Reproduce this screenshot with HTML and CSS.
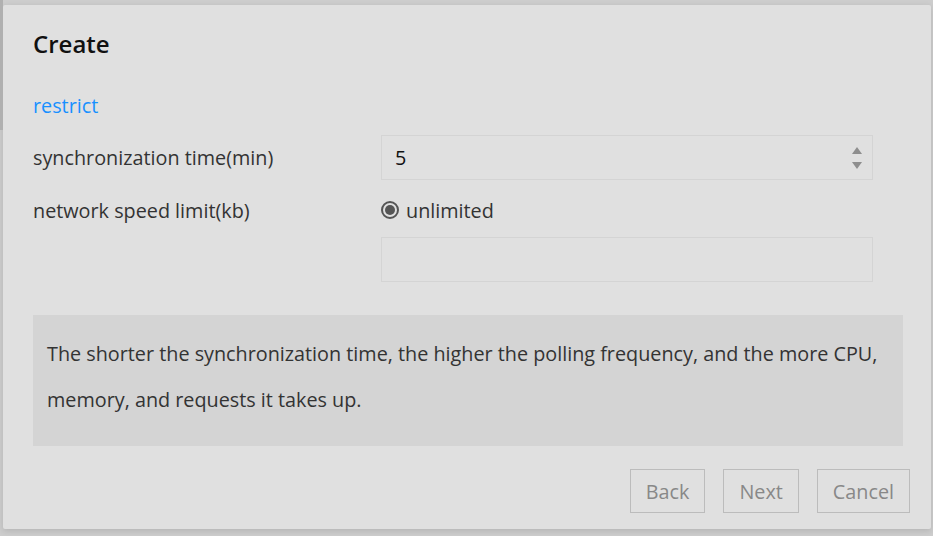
FILE: index.html
```html
<!DOCTYPE html>
<html>
<head>
<meta charset="utf-8">
<link rel="stylesheet" href="styles.css">
</head>
<body>
<div class="backdrop">
  <div class="side-strip"></div>
  <div class="dialog">
    <h1 class="title">Create</h1>
    <div class="section-link">restrict</div>
    <div class="form-row first">
      <div class="label">synchronization time(min)</div>
      <div class="field">
        <div class="input number">
          <span class="value">5</span>
          <span class="spinner">
            <svg width="12" height="26" viewBox="0 0 12 26"><path d="M6 2 L11 9 L1 9 Z" fill="#8e8e8e"/><path d="M1 17 L11 17 L6 24 Z" fill="#8e8e8e"/></svg>
          </span>
        </div>
      </div>
    </div>
    <div class="form-row radio-row">
      <div class="label">network speed limit(kb)</div>
      <div class="field">
        <label class="radio"><span class="radio-dot"></span><span>unlimited</span></label>
      </div>
    </div>
    <div class="form-row extra">
      <div class="label"></div>
      <div class="field"><div class="input"></div></div>
    </div>
    <div class="info">The shorter the synchronization time, the higher the polling frequency, and the more CPU, memory, and requests it takes up.</div>
    <div class="actions">
      <button class="btn">Back</button>
      <button class="btn">Next</button>
      <button class="btn">Cancel</button>
    </div>
  </div>
</div>
</body>
</html>
```
FILE: styles.css
```css
html, body {
  margin: 0;
  padding: 0;
  width: 933px;
  height: 536px;
  overflow: hidden;
  background: #cdcdcd;
  font-family: "Open Sans", "Noto Sans", sans-serif;
}
.backdrop {
  position: relative;
  width: 933px;
  height: 536px;
  padding: 5px 2px 0 3px;
  box-sizing: border-box;
}
.side-strip {
  position: absolute;
  left: 0;
  top: 0;
  width: 3px;
  height: 130px;
  background: #b0b0b0;
}
.dialog {
  background: #e0e0e0;
  height: 524px;
  box-sizing: border-box;
  padding: 27px 22px 0 30px;
  box-shadow: 0 2px 6px rgba(0,0,0,0.12);
  border-radius: 2px;
}
.title {
  margin: 0;
  font-size: 24px;
  font-weight: 600;
  color: #111;
  line-height: 24px;
}
.section-link {
  margin-top: 38px;
  color: #1890ff;
  font-size: 19.8px;
  line-height: 24px;
}
.form-row {
  display: flex;
  align-items: center;
}
.form-row.first {
  margin-top: 17px;
}
.form-row.radio-row {
  margin-top: 7px;
}
.form-row.extra {
  margin-top: 4px;
}
.label {
  width: 348px;
  font-size: 19.8px;
  color: #333;
}
.field {
  width: 492px;
}
.input {
  height: 45px;
  border: 1px solid #d4d4d4;
  box-sizing: border-box;
  display: flex;
  align-items: center;
  justify-content: space-between;
  padding: 0 9px 0 13px;
  font-size: 19.8px;
  color: #111;
}
.spinner {
  display: flex;
}
.radio {
  display: flex;
  align-items: center;
  gap: 7px;
  height: 46px;
  font-size: 19.8px;
  color: #333;
}
.radio-dot {
  width: 14px;
  height: 14px;
  border: 2px solid #555;
  border-radius: 50%;
  position: relative;
  box-sizing: content-box;
}
.radio-dot::after {
  content: "";
  position: absolute;
  left: 2px;
  top: 2px;
  width: 10px;
  height: 10px;
  border-radius: 50%;
  background: #555;
}
.info {
  margin-top: 33px;
  background: #d4d4d4;
  width: 870px;
  box-sizing: border-box;
  padding: 16px 14px 23px 14px;
  font-size: 19.8px;
  line-height: 46px;
  color: #333;
}
.actions {
  display: flex;
  justify-content: flex-end;
  gap: 18px;
  margin-top: 23px;
  margin-right: -1px;
}
.btn {
  height: 44px;
  padding: 0 15px;
  background: transparent;
  border: 1px solid #bcbcbc;
  font-family: inherit;
  font-size: 19.8px;
  color: #888;
}
```
